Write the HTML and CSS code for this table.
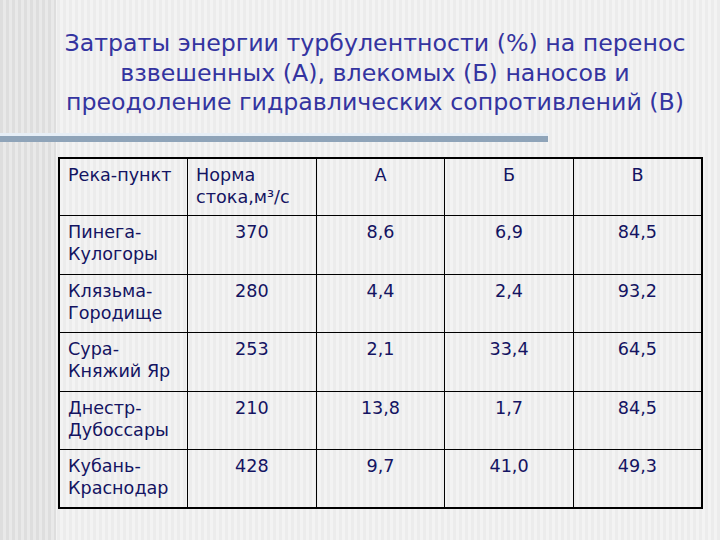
FILE: index.html
```html
<!DOCTYPE html>
<html lang="ru">
<head>
<meta charset="utf-8">
<link rel="stylesheet" href="styles.css">
</head>
<body>
<div class="slide">
  <h1 class="title">Затраты энергии турбулентности (%) на перенос<br>взвешенных (А), влекомых (Б) наносов и<br>преодоление гидравлических сопротивлений (В)</h1>
  <div class="rule"></div>
  <table class="data">
    <tr>
      <td>Река-пункт</td>
      <td>Норма<br>стока,м³/с</td>
      <td class="c">А</td>
      <td class="c">Б</td>
      <td class="c">В</td>
    </tr>
    <tr>
      <td>Пинега-<br>Кулогоры</td>
      <td class="c">370</td>
      <td class="c">8,6</td>
      <td class="c">6,9</td>
      <td class="c">84,5</td>
    </tr>
    <tr>
      <td>Клязьма-<br>Городище</td>
      <td class="c">280</td>
      <td class="c">4,4</td>
      <td class="c">2,4</td>
      <td class="c">93,2</td>
    </tr>
    <tr>
      <td>Сура-<br>Княжий Яр</td>
      <td class="c">253</td>
      <td class="c">2,1</td>
      <td class="c">33,4</td>
      <td class="c">64,5</td>
    </tr>
    <tr>
      <td>Днестр-<br>Дубоссары</td>
      <td class="c">210</td>
      <td class="c">13,8</td>
      <td class="c">1,7</td>
      <td class="c">84,5</td>
    </tr>
    <tr>
      <td>Кубань-<br>Краснодар</td>
      <td class="c">428</td>
      <td class="c">9,7</td>
      <td class="c">41,0</td>
      <td class="c">49,3</td>
    </tr>
  </table>
</div>
</body>
</html>
```
FILE: styles.css
```css
html, body {
  margin: 0;
  padding: 0;
}
body {
  width: 720px;
  height: 540px;
  overflow: hidden;
  font-family: "DejaVu Sans", Verdana, sans-serif;
  background-color: #f2f2f2;
  background-image:
    repeating-linear-gradient(90deg, #dedede 0 3px, #e9e9e9 3px 6px),
    repeating-linear-gradient(90deg, #f3f3f3 0 3px, #ececec 3px 6px);
  background-size: 56px 100%, 100% 100%;
  background-repeat: no-repeat, no-repeat;
}
.slide {
  width: 720px;
  height: 540px;
  padding-top: 29px;
  box-sizing: border-box;
}
.title {
  margin: 0 0 0 30px;
  font-weight: normal;
  font-size: 23.7px;
  line-height: 29.5px;
  color: #3434a0;
  text-align: center;
}
.rule {
  margin-top: 15px;
  width: 548px;
  height: 6px;
  background: #8fa4b9;
  border-top: 3px solid #e6eef6;
}
.data {
  margin: 15px 0 0 58px;
  width: 645px;
  border-collapse: collapse;
  border: 2px solid #000;
  table-layout: fixed;
  color: #141462;
  font-size: 17.6px;
  line-height: 22px;
}
.data td {
  border: 1px solid #000;
  height: 58.4px;
  box-sizing: border-box;
  vertical-align: top;
  padding: 5px 8px 0 8px;
}
.data td.c {
  text-align: center;
}
```
